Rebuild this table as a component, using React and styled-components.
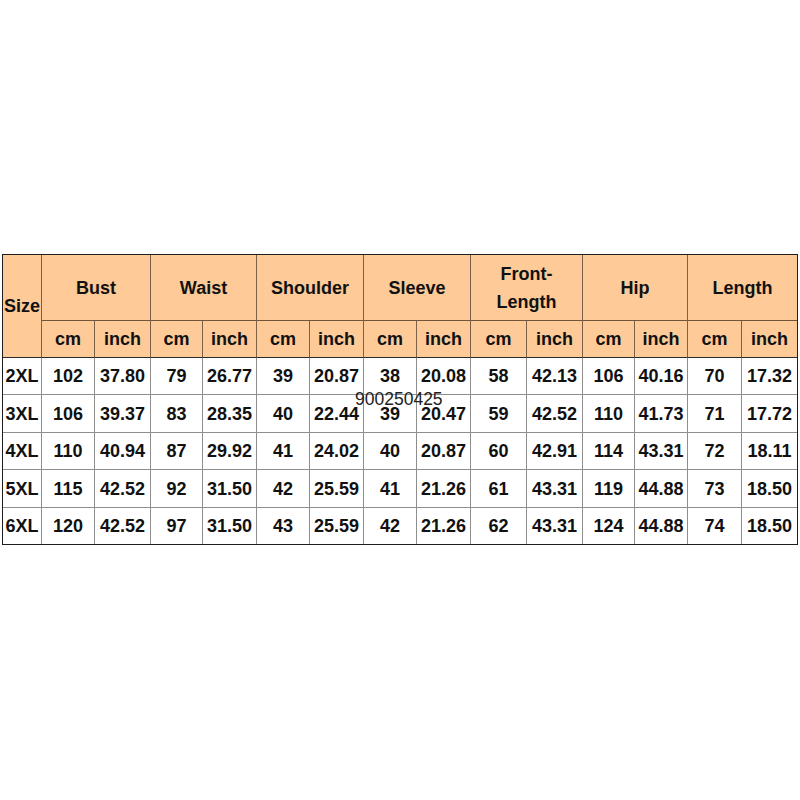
import React from "react";
import styled, { createGlobalStyle } from "styled-components";

const Global = createGlobalStyle`
  html, body { margin: 0; padding: 0; background: #fff; }
  body { font-family: "Liberation Sans", Arial, sans-serif; }
`;

const Page = styled.div`
  width: 800px;
  height: 800px;
  padding: 254px 0 0 2px;
  box-sizing: border-box;
  background: #fff;
`;

const Chart = styled.div`
  position: relative;
  display: grid;
  grid-template-columns: 39px 53px 56px 52px 54px 53px 54px 53px 54px 56px 56px 52px 53px 54px 55px;
  grid-template-rows: 66px 37px 37px 38px 37px 38px 36px;
  width: max-content;
  border: 1px solid #1e1e1e;
  font-family: "Liberation Sans", Arial, sans-serif;
  font-weight: 700;
  font-size: 18px;
  color: #111;
`;

const Cell = styled.div`
  box-sizing: border-box;
  display: flex;
  align-items: center;
  justify-content: center;
  text-align: center;
  line-height: 28px;
  background: ${(p) => (p.$head ? "#fdca98" : "#fff")};
  grid-column: span ${(p) => p.$cols || 1};
  grid-row: span ${(p) => p.$rows || 1};
  border-right: ${(p) => (p.$lastCol ? "none" : `1px solid ${p.$head ? "#7c6147" : "#8e8e8e"}`)};
  border-bottom: ${(p) =>
    p.$lastRow ? "none" : `1px solid ${p.$sep ? "#2a2a2a" : p.$head ? "#6e5439" : "#8e8e8e"}`};
  white-space: nowrap;
  letter-spacing: 0;
`;

const Watermark = styled.div`
  position: absolute;
  left: 352px;
  top: 134px;
  font-family: "Liberation Sans", Arial, sans-serif;
  font-weight: 400;
  font-size: 17.5px;
  line-height: 20px;
  color: #222;
  pointer-events: none;
`;

const groups = [
  ["Bust"],
  ["Waist"],
  ["Shoulder"],
  ["Sleeve"],
  ["Front-", "Length"],
  ["Hip"],
  ["Length"],
];

const rows = [
  ["2XL", "102", "37.80", "79", "26.77", "39", "20.87", "38", "20.08", "58", "42.13", "106", "40.16", "70", "17.32"],
  ["3XL", "106", "39.37", "83", "28.35", "40", "22.44", "39", "20.47", "59", "42.52", "110", "41.73", "71", "17.72"],
  ["4XL", "110", "40.94", "87", "29.92", "41", "24.02", "40", "20.87", "60", "42.91", "114", "43.31", "72", "18.11"],
  ["5XL", "115", "42.52", "92", "31.50", "42", "25.59", "41", "21.26", "61", "43.31", "119", "44.88", "73", "18.50"],
  ["6XL", "120", "42.52", "97", "31.50", "43", "25.59", "42", "21.26", "62", "43.31", "124", "44.88", "74", "18.50"],
];

export default function App() {
  return (
    <Page>
      <Global />
      <Chart>
        <Cell $head $rows={2} $sep>Size</Cell>
        {groups.map((g, i) => (
          <Cell key={i} $head $cols={2} $lastCol={i === groups.length - 1}>
            <span>
              {g.map((line, j) => (
                <React.Fragment key={j}>
                  {j > 0 && <br />}
                  {line}
                </React.Fragment>
              ))}
            </span>
          </Cell>
        ))}
        {groups.map((_, i) => (
          <React.Fragment key={i}>
            <Cell $head $sep>cm</Cell>
            <Cell $head $sep $lastCol={i === groups.length - 1}>inch</Cell>
          </React.Fragment>
        ))}
        {rows.map((r, ri) =>
          r.map((v, ci) => (
            <Cell
              key={`${ri}-${ci}`}
              $lastCol={ci === r.length - 1}
              $lastRow={ri === rows.length - 1}
            >
              {v}
            </Cell>
          ))
        )}
        <Watermark>900250425</Watermark>
      </Chart>
    </Page>
  );
}
